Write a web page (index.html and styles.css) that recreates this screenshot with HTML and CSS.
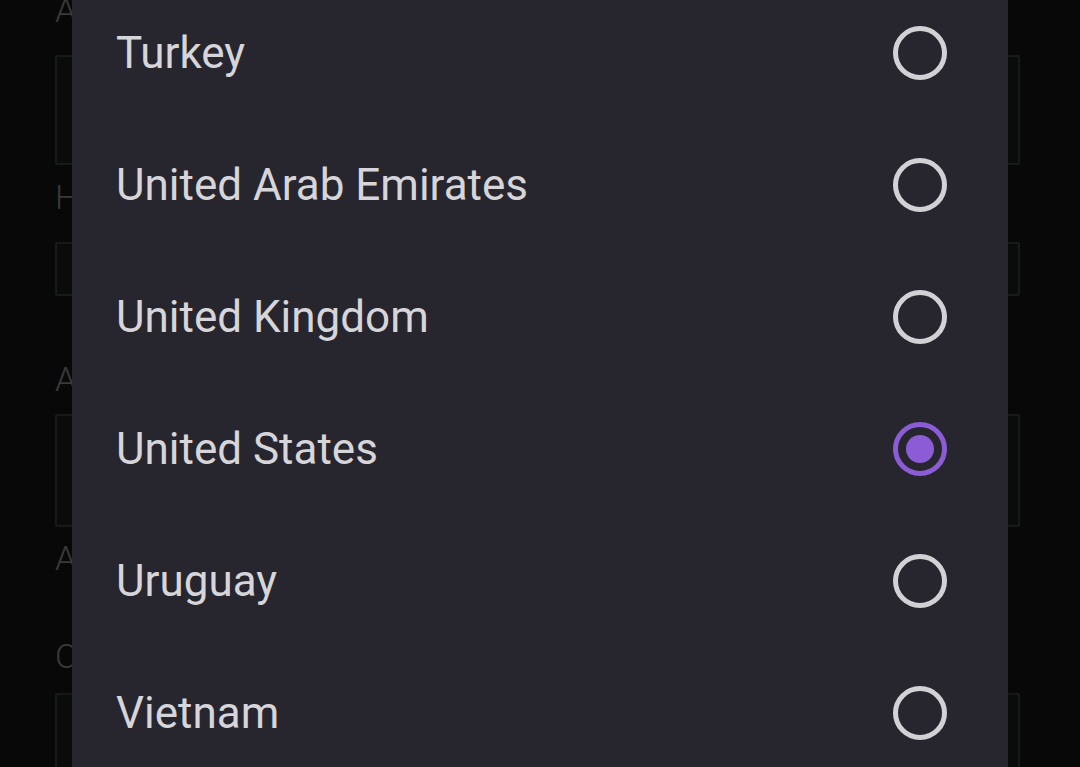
FILE: index.html
```html
<!DOCTYPE html>
<html>
<head>
<meta charset="utf-8">
<link rel="stylesheet" href="styles.css">
</head>
<body>
<div class="page">
  <div class="label l1">A</div>
  <div class="field f1"></div>
  <div class="label l2">H</div>
  <div class="field f2"></div>
  <div class="label l3">A</div>
  <div class="field f3"></div>
  <div class="label l4">A</div>
  <div class="label l5">C</div>
  <div class="field f4"></div>
</div>
<div class="dialog">
  <ul class="list">
    <li class="row"><span class="name">Turkey</span><span class="radio"></span></li>
    <li class="row"><span class="name">United Arab Emirates</span><span class="radio"></span></li>
    <li class="row"><span class="name">United Kingdom</span><span class="radio"></span></li>
    <li class="row"><span class="name">United States</span><span class="radio checked"></span></li>
    <li class="row"><span class="name">Uruguay</span><span class="radio"></span></li>
    <li class="row"><span class="name">Vietnam</span><span class="radio"></span></li>
  </ul>
</div>
</body>
</html>
```
FILE: styles.css
```css
html, body {
  margin: 0;
  padding: 0;
  width: 1080px;
  height: 767px;
  overflow: hidden;
  background: #080808;
  font-family: Roboto, "Noto Sans", sans-serif;
}
.page {
  display: flex;
  flex-direction: column;
  padding: 0 60px 0 55px;
  margin-top: -7px;
}
.label {
  font-size: 34px;
  line-height: 34px;
  height: 34px;
  font-weight: 300;
  color: #3a3a3a;
}
.field {
  box-sizing: border-box;
  border: 2px solid #181a1a;
  background: #0a0c0c;
  border-radius: 2px;
}
.f1 { margin-top: 28px; height: 110px; }
.l2 { margin-top: 15px; }
.f2 { margin-top: 28px; height: 54px; }
.l3 { margin-top: 66px; }
.f3 { margin-top: 18px; height: 113px; }
.l4 { margin-top: 14px; }
.l5 { margin-top: 64px; }
.f4 { margin-top: 20px; height: 110px; }

.dialog {
  position: absolute;
  top: 0;
  left: 72px;
  width: 936px;
  height: 767px;
  background: #27262f;
  overflow: hidden;
}
.list {
  list-style: none;
  margin: -13px 0 0 0;
  padding: 0;
}
.row {
  height: 132px;
  display: flex;
  align-items: center;
  justify-content: space-between;
  padding: 0 61px 0 44px;
}
.name {
  font-size: 44px;
  color: #d6d5da;
}
.radio {
  box-sizing: border-box;
  width: 54px;
  height: 54px;
  border: 5px solid #d2d1d6;
  border-radius: 50%;
  display: flex;
  align-items: center;
  justify-content: center;
}
.radio.checked {
  border-color: #8b5cd6;
}
.radio.checked::after {
  content: "";
  width: 28px;
  height: 28px;
  border-radius: 50%;
  background: #8b5cd6;
}
```
